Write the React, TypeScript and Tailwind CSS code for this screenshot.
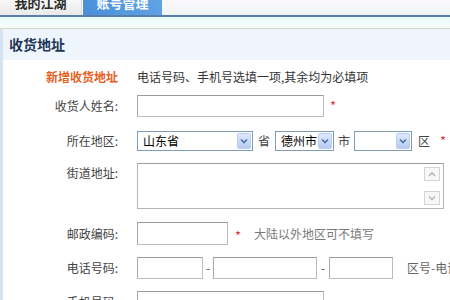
import React from 'react';

const font = { fontFamily: '"Noto Sans CJK SC", "Liberation Sans", sans-serif' };

const Chevron: React.FC<{ up?: boolean; color?: string }> = ({ up, color = '#4d6fa8' }) => (
  <svg width="8" height="6" viewBox="0 0 8 6">
    <path
      d={up ? 'M1 5 L4 2 L7 5' : 'M1 1.5 L4 4.5 L7 1.5'}
      fill="none"
      stroke={color}
      strokeWidth="1.6"
    />
  </svg>
);

const Select: React.FC<{ value?: string; width: string }> = ({ value, width }) => (
  <div className={`${width} h-[20px] flex items-center border border-[#7f9db9] bg-white p-px`}>
    <span className="flex-1 pl-[4px] text-[12px] leading-none text-black">{value}</span>
    <div className="w-[14px] h-full flex items-center justify-center rounded-[2px] bg-gradient-to-b from-[#dfe9fc] to-[#b7cbf3] border border-[#b9cdf2]">
      <Chevron />
    </div>
  </div>
);

const Input: React.FC<{ width: string }> = ({ width }) => (
  <div className={`${width} h-[22px] border border-[#bcbcbc] border-t-[#9a9a9a] border-l-[#a8a8a8] bg-white`} />
);

const Label: React.FC<{ children: React.ReactNode; top?: boolean }> = ({ children, top }) => (
  <div className={`w-[115px] shrink-0 text-right text-[12px] text-[#444] leading-[20px] ${top ? 'self-start' : ''}`}>
    {children}
  </div>
);

const Star = () => <span className="text-[13px] text-[#d43c3c]">*</span>;

export default function App() {
  return (
    <div className="w-[450px] h-[300px] overflow-hidden bg-white" style={font}>
      {/* tabs */}
      <div className="h-[15px] flex overflow-hidden bg-gradient-to-b from-[#fbf7fb] to-[#eef6f4]">
        <div className="w-[82px] h-full flex justify-center bg-gradient-to-b from-[#f8f8f8] to-[#e9e9e9] border-r border-[#d8d8d8]">
          <span className="-mt-[5px] leading-[16px] text-[13px] font-bold text-[#2a2a2a]">我的江湖</span>
        </div>
        <div className="w-px h-full bg-white" />
        <div className="w-[79px] h-full flex justify-center bg-gradient-to-r from-[#4a8fd8] to-[#5fa3e6]">
          <span className="-mt-[5px] leading-[16px] text-[13px] font-bold text-white">账号管理</span>
        </div>
      </div>
      <div className="h-[2px] bg-[#5a7ea7]" />
      <div className="h-[11px] bg-gradient-to-b from-[#e8fbff] to-[#f8fcf8]" />
      <div className="h-px bg-[#cfd7cf]" />

      {/* panel */}
      <div className="border-l-[3px] border-[#d3e3f1] h-full">
        <div className="h-[31px] flex items-center pl-[6px] bg-[#eff5fd]">
          <span className="text-[14px] font-bold text-[#1d3557]">收货地址</span>
        </div>

        <div className="flex flex-col pt-[5px]">
          <div className="h-[24px] flex items-center gap-[19px]">
            <div className="w-[115px] shrink-0 text-right text-[12px] font-bold text-[#e4601e]">新增收货地址</div>
            <span className="text-[12px] text-[#333]">电话号码、手机号选填一项,其余均为必填项</span>
          </div>

          <div className="mt-[6px] h-[22px] flex items-center">
            <Label>收货人姓名:</Label>
            <div className="ml-[19px] flex items-center gap-[6px]">
              <Input width="w-[187px]" />
              <Star />
            </div>
          </div>

          <div className="mt-[14px] h-[20px] flex items-center">
            <Label>所在地区:</Label>
            <div className="ml-[19px] flex items-center text-[12px] text-[#444]">
              <Select value="山东省" width="w-[116px]" />
              <span className="ml-[5px] mr-[5px]">省</span>
              <Select value="德州市" width="w-[59px]" />
              <span className="ml-[4px] mr-[4px]">市</span>
              <Select width="w-[58px]" />
              <span className="ml-[6px]">区</span>
              <span className="ml-[10px]"><Star /></span>
            </div>
          </div>

          <div className="mt-[12px] h-[46px] flex">
            <Label top>街道地址:</Label>
            <div className="ml-[19px] w-[307px] h-full border border-[#b5b5b5] border-t-[#9c9c9c] bg-white flex justify-end p-[3px]">
              <div className="w-[16px] flex flex-col justify-between">
                <div className="h-[14px] flex items-center justify-center border border-[#d4d4d4] bg-[#f7f7f7]">
                  <Chevron up color="#b8b8b8" />
                </div>
                <div className="h-[14px] flex items-center justify-center border border-[#d4d4d4] bg-[#f7f7f7]">
                  <Chevron color="#b8b8b8" />
                </div>
              </div>
            </div>
          </div>

          <div className="mt-[13px] h-[23px] flex items-center">
            <Label>邮政编码:</Label>
            <div className="ml-[19px] flex items-center">
              <Input width="w-[91px] h-[23px]" />
              <span className="ml-[7px]"><Star /></span>
              <span className="ml-[13px] text-[12px] text-[#7a7a7a]">大陆以外地区可不填写</span>
            </div>
          </div>

          <div className="mt-[12px] h-[22px] flex items-center">
            <Label>电话号码:</Label>
            <div className="ml-[19px] flex items-center text-[12px] text-[#555]">
              <Input width="w-[66px]" />
              <span className="w-[10px] text-center">-</span>
              <Input width="w-[104px]" />
              <span className="w-[12px] text-center">-</span>
              <Input width="w-[64px]" />
              <span className="ml-[14px] whitespace-nowrap text-[#666]">区号-电话号码-分机</span>
            </div>
          </div>

          <div className="mt-[12px] h-[22px] flex items-center">
            <Label>手机号码:</Label>
            <div className="ml-[19px]">
              <Input width="w-[187px]" />
            </div>
          </div>
        </div>
      </div>
    </div>
  );
}
